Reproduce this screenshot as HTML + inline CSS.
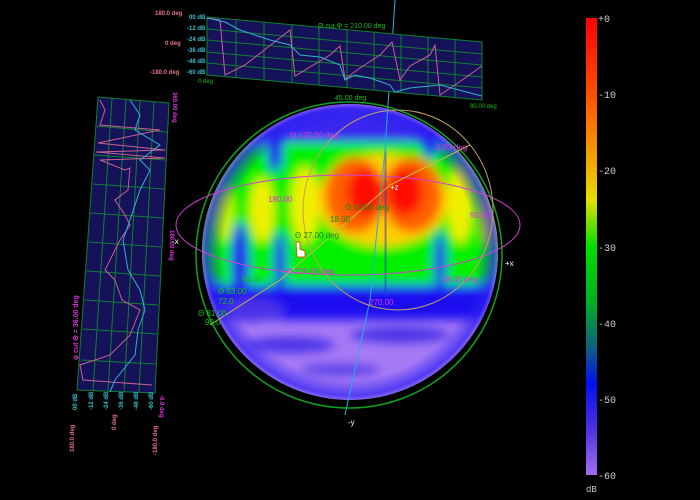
<!DOCTYPE html>
<html><head><style>
body{margin:0;background:#000;width:700px;height:500px;overflow:hidden;font-family:"Liberation Sans",sans-serif}
</style></head><body>
<svg width="700" height="500" viewBox="0 0 700 500" xmlns="http://www.w3.org/2000/svg" style="position:absolute;left:0;top:0">
<defs>
<linearGradient id="cb" x1="0" y1="0" x2="0" y2="1">
<stop offset="0" stop-color="#ff0000"/>
<stop offset="0.17" stop-color="#ff5000"/>
<stop offset="0.33" stop-color="#f0b000"/>
<stop offset="0.4" stop-color="#e0e000"/>
<stop offset="0.5" stop-color="#00e000"/>
<stop offset="0.62" stop-color="#00b020"/>
<stop offset="0.72" stop-color="#106080"/>
<stop offset="0.8" stop-color="#0010f0"/>
<stop offset="0.9" stop-color="#5030e0"/>
<stop offset="1" stop-color="#a070f0"/>
</linearGradient>
<radialGradient id="limb" cx="0.5" cy="0.5" r="0.5">
<stop offset="0.86" stop-color="#2020f0" stop-opacity="0"/>
<stop offset="0.97" stop-color="#3020f0" stop-opacity="0.7"/>
<stop offset="1" stop-color="#8060f0" stop-opacity="0.8"/>
</radialGradient>
<clipPath id="sc"><circle cx="350" cy="252" r="148"/></clipPath>
<filter id="bl" x="-20%" y="-20%" width="140%" height="140%"><feGaussianBlur stdDeviation="5"/></filter>
<filter id="bl2"><feGaussianBlur stdDeviation="2"/></filter>
</defs>
<rect x="586" y="18" width="11" height="457" fill="url(#cb)"/>
<g fill="#ccc" font-size="10" font-family="Liberation Mono,monospace">
<text x="598" y="22">+0</text><text x="598" y="98">-10</text><text x="598" y="174">-20</text>
<text x="598" y="251">-30</text><text x="598" y="327">-40</text><text x="598" y="403">-50</text>
<text x="598" y="479">-60</text><text x="586" y="492" font-size="9">dB</text></g>

<g clip-path="url(#sc)">
<rect x="190" y="100" width="320" height="320" fill="#a77af5"/>
<g filter="url(#bl)">
<rect x="190" y="262" width="320" height="58" fill="#1a10f0"/>
<rect x="190" y="105" width="320" height="40" fill="#3a28f0"/>
<rect x="190" y="142" width="320" height="143" rx="30" fill="#00f000"/>
<ellipse cx="225" cy="215" rx="9" ry="26" fill="#c0f000"/>
<ellipse cx="262" cy="210" rx="12" ry="32" fill="#f0f000"/>
<ellipse cx="305" cy="205" rx="14" ry="38" fill="#f0f000"/>
<ellipse cx="460" cy="205" rx="12" ry="38" fill="#f0f000"/>
<ellipse cx="488" cy="215" rx="7" ry="28" fill="#e0f000"/>
<ellipse cx="383" cy="200" rx="66" ry="46" fill="#ffd000"/>
<ellipse cx="355" cy="195" rx="30" ry="38" fill="#ff6000"/>
<ellipse cx="412" cy="195" rx="30" ry="38" fill="#ff6000"/>
<ellipse cx="365" cy="192" rx="18" ry="24" fill="#ff1000"/>
<ellipse cx="405" cy="192" rx="18" ry="24" fill="#ff1000"/>
<ellipse cx="240" cy="262" rx="9" ry="40" fill="#2018f0"/>
<ellipse cx="280" cy="262" rx="6" ry="30" fill="#2018f0"/>
<ellipse cx="440" cy="262" rx="6" ry="30" fill="#2018f0"/>
<ellipse cx="275" cy="150" rx="8" ry="22" fill="#2018f0"/>
<ellipse cx="430" cy="140" rx="8" ry="18" fill="#2018f0"/>
<ellipse cx="290" cy="345" rx="45" ry="8" fill="#4a30e8"/>
<ellipse cx="400" cy="335" rx="50" ry="8" fill="#4a30e8"/>
<ellipse cx="340" cy="370" rx="40" ry="6" fill="#5a40e8"/>
<ellipse cx="250" cy="310" rx="35" ry="12" fill="#4a30e8"/>
</g>
<line x1="385" y1="150" x2="386" y2="300" stroke="#2030d0" stroke-width="3" filter="url(#bl2)"/>
<circle cx="350" cy="252" r="148" fill="url(#limb)"/>
</g>
<circle cx="349" cy="255" r="153" fill="none" stroke="#10a020" stroke-width="1.5"/>
<g fill="none" stroke-width="1">
<ellipse cx="348" cy="225" rx="172" ry="50" stroke="#d040d0"/>
<ellipse cx="398" cy="210" rx="95" ry="100" stroke="#c0a060"/>
<path d="M395 0 L385 150 L370 300 L345 415" stroke="#20b0e0"/>
<path d="M210 325 L280 280 L390 185 L470 145" stroke="#c0c040"/>
</g>
<g font-size="8" font-family="Liberation Sans,sans-serif">
<text x="290" y="138" fill="#e030e0">Θ 135.00 deg</text>
<text x="436" y="150" fill="#e030e0">4.50 deg</text>
<text x="268" y="202" fill="#e030e0">180.00</text>
<text x="470" y="218" fill="#e030e0">90.00</text>
<text x="345" y="210" fill="#109010">Θ 9.000 deg</text>
<text x="330" y="222" fill="#109010">18.00</text>
<text x="295" y="238" fill="#109010">Θ 27.00 deg</text>
<text x="286" y="274" fill="#e030e0">Θ 225.00 deg</text>
<text x="442" y="282" fill="#e030e0">18.00 deg</text>
<text x="369" y="305" fill="#e030e0">270.00</text>
<text x="242" y="282" fill="#10c010">54.00</text>
<text x="218" y="294" fill="#10c010">Θ 63.00</text>
<text x="218" y="304" fill="#10c010">72.0</text>
<text x="198" y="316" fill="#10c010">Θ 81.00</text>
<text x="205" y="325" fill="#10c010">90.0</text>
<text x="390" y="190" fill="#fff">+z</text>
<text x="505" y="266" fill="#fff">+x</text>
<text x="172" y="244" fill="#fff">-x</text>
<text x="348" y="425" fill="#fff">-y</text>
<text x="335" y="100" fill="#10c010" font-size="7">45.00 deg</text>
</g>
<path d="M296 242 l4 0 l0 7 l5 2 l0 6 l-8 0 z" fill="#fff" stroke="#d06020"/>

<polygon points="207,17 482,42 482,100 207,75" fill="#15125a" stroke="#108030"/>
<g stroke="#108030" stroke-width="1">
<line x1="207" y1="29" x2="482" y2="54"/><line x1="207" y1="40" x2="482" y2="65"/>
<line x1="207" y1="52" x2="482" y2="77"/><line x1="207" y1="63" x2="482" y2="88"/>
<line x1="236" y1="20" x2="236" y2="78"/><line x1="264" y1="22" x2="264" y2="80"/>
<line x1="292" y1="25" x2="292" y2="83"/><line x1="319" y1="27" x2="319" y2="85"/>
<line x1="347" y1="30" x2="347" y2="88"/><line x1="374" y1="32" x2="374" y2="90"/>
<line x1="401" y1="35" x2="401" y2="93"/><line x1="428" y1="37" x2="428" y2="95"/>
<line x1="455" y1="40" x2="455" y2="98"/></g>
<polyline fill="none" stroke="#c86090" points="207,18 220,20 225,75 245,65 290,30 295,76 330,55 340,46 345,79 360,68 380,55 392,42 400,80 410,66 430,55 435,45 440,95 455,85 482,66"/>
<polyline fill="none" stroke="#30b0d0" points="207,18 225,22 240,30 270,40 290,45 300,55 320,57 340,65 345,80 355,75 370,78 390,85 395,92 410,88 440,85 482,96"/>
<text x="318" y="28" font-size="7" fill="#10c010">Θ cut  Φ = 210.00 deg</text>
<g font-size="6" fill="#30c0d0" font-weight="bold"><text x="189" y="19">00 dB</text><text x="187" y="30">-12 dB</text><text x="187" y="41">-24 dB</text><text x="187" y="52">-36 dB</text><text x="187" y="63">-48 dB</text><text x="187" y="74">-60 dB</text></g>
<g font-size="6" fill="#e07090" font-weight="bold"><text x="155" y="15">180.0 deg</text><text x="165" y="45">0 deg</text><text x="150" y="74">-180.0 deg</text></g>
<text x="198" y="83" font-size="6" fill="#10c010">0 deg</text>
<text x="470" y="108" font-size="6" fill="#10c010">90.00 deg</text>

<polygon points="98,97 169,103 155,393 77,390" fill="#15125a" stroke="#108030"/>
<g stroke="#108030" stroke-width="1">
<line x1="112" y1="98" x2="93" y2="391"/><line x1="126" y1="99" x2="108" y2="391"/>
<line x1="140" y1="100" x2="124" y2="392"/><line x1="154" y1="102" x2="139" y2="392"/>
<line x1="96" y1="126" x2="167" y2="132"/><line x1="94" y1="155" x2="166" y2="160"/>
<line x1="93" y1="184" x2="164" y2="189"/><line x1="91" y1="213" x2="163" y2="218"/>
<line x1="89" y1="242" x2="161" y2="247"/><line x1="87" y1="271" x2="160" y2="276"/>
<line x1="85" y1="300" x2="158" y2="305"/><line x1="83" y1="329" x2="157" y2="334"/>
<line x1="81" y1="360" x2="156" y2="364"/></g>
<polyline fill="none" stroke="#c86090" points="100,100 105,110 100,125 160,130 98,143 165,150 96,152 165,158 100,160 125,170 130,168 128,190 115,200 125,215 130,225 120,240 105,270 115,280 122,300 140,310 130,335 110,355 80,365 83,380 152,385"/>
<polyline fill="none" stroke="#30b0d0" points="130,100 140,115 135,130 160,145 140,160 150,170 140,190 130,220 123,240 128,270 140,290 145,310 138,330 135,355 115,380 110,392"/>
<g font-size="6" font-weight="bold">
<text transform="translate(78,360) rotate(-90)" font-size="7" fill="#e030e0">φ cut  Θ = 36.00 deg</text>
<text transform="translate(170,230) rotate(90)" fill="#e030e0">180.00 deg</text>
<text transform="translate(173,92) rotate(90)" fill="#e030e0">360.00 deg</text>
<text transform="translate(160,395) rotate(90)" fill="#e030e0">-0.0 deg</text>
<g fill="#30c0d0"><text transform="translate(77,410) rotate(-90)">00 dB</text><text transform="translate(93,410) rotate(-90)">-12 dB</text><text transform="translate(108,410) rotate(-90)">-24 dB</text><text transform="translate(123,410) rotate(-90)">-36 dB</text><text transform="translate(138,410) rotate(-90)">-48 dB</text><text transform="translate(153,410) rotate(-90)">-60 dB</text></g>
<g fill="#e07090"><text transform="translate(74,452) rotate(-90)">180.0 deg</text><text transform="translate(116,430) rotate(-90)">0 deg</text><text transform="translate(157,455) rotate(-90)">-180.0 deg</text></g>
</g>
</svg>
</body></html>
